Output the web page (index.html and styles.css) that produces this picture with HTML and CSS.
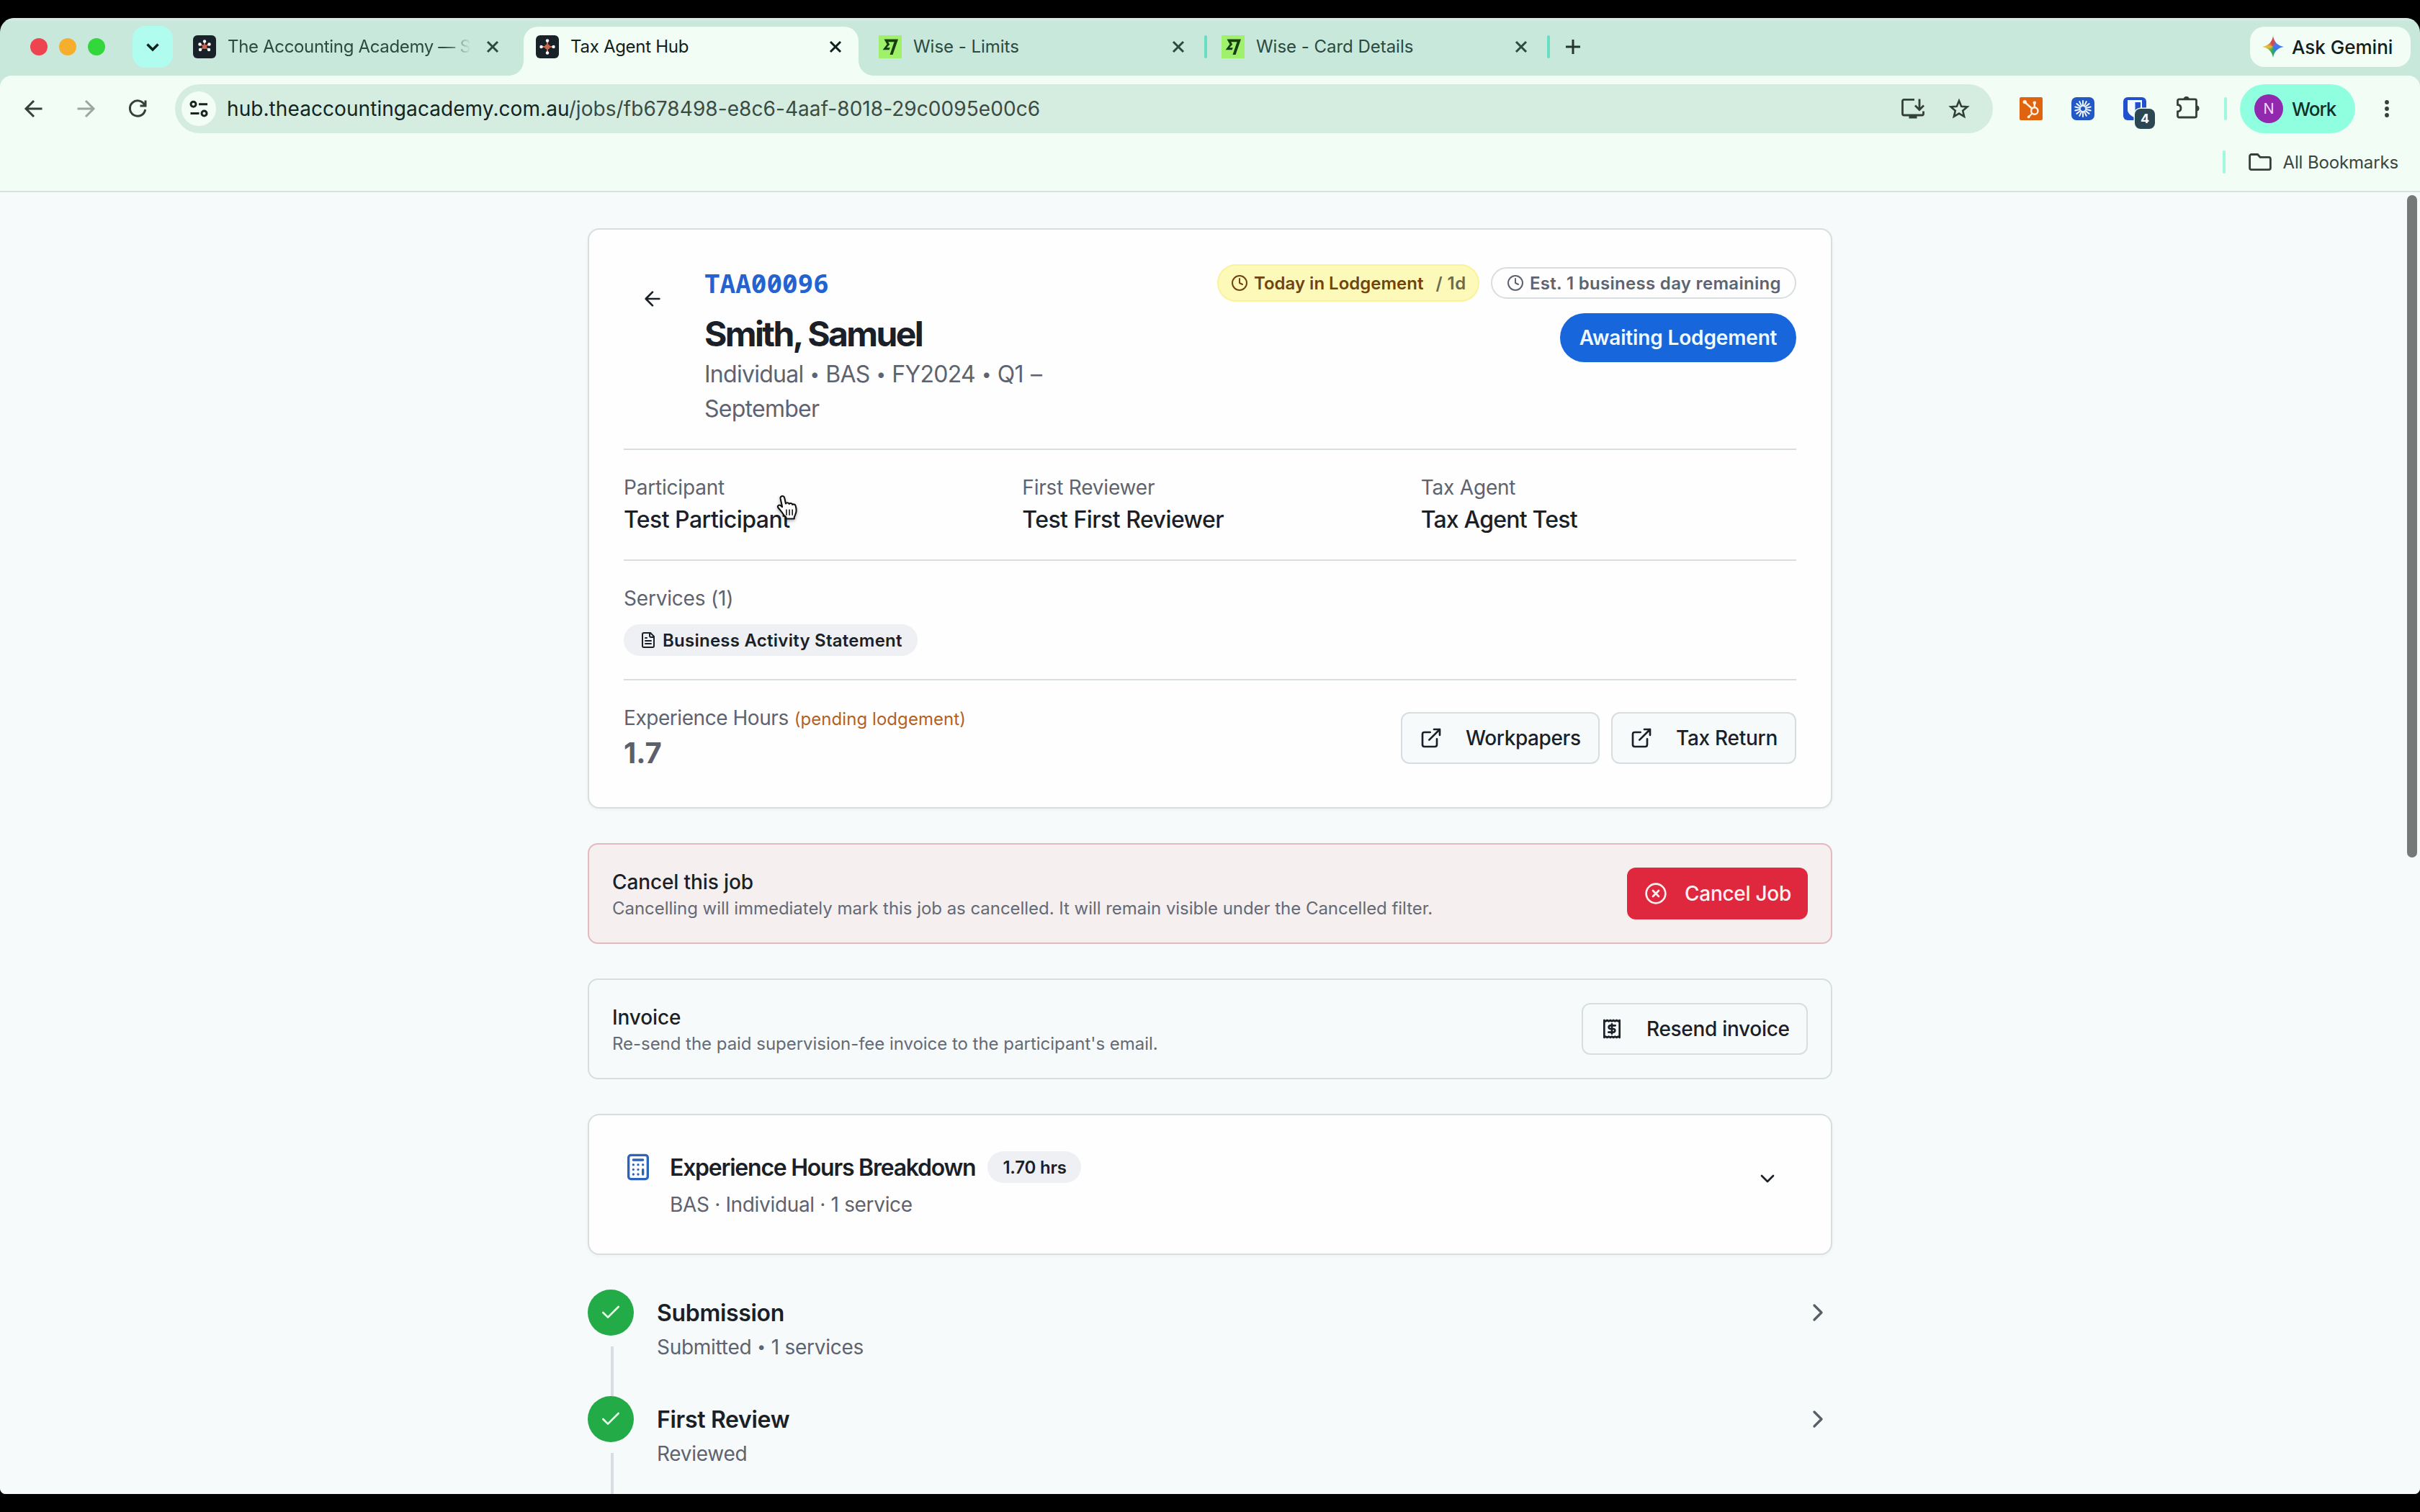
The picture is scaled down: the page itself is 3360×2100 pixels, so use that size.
FILE: index.html
```html
<!DOCTYPE html>
<html lang="en">
<head>
<meta charset="utf-8">
<title>Tax Agent Hub</title>
<link rel="stylesheet" href="styles.css">
</head>
<body>
<svg class="defs" aria-hidden="true">
  <symbol id="close" viewBox="0 0 32 32"><path d="M9 9l14 14M23 9L9 23" stroke="currentColor" stroke-width="3" fill="none"/></symbol>
  <symbol id="clock" viewBox="0 0 24 24"><circle cx="12" cy="12" r="10"/><path d="M12 6v6l4 2"/></symbol>
  <symbol id="external" viewBox="0 0 24 24"><path d="M15 3h6v6M10 14L21 3M18 13v6a2 2 0 0 1-2 2H5a2 2 0 0 1-2-2V8a2 2 0 0 1 2-2h6"/></symbol>
  <symbol id="check" viewBox="0 0 24 24"><path d="M20 6L9 17l-5-5"/></symbol>
  <symbol id="right" viewBox="0 0 24 24"><path d="M9 18l6-6-6-6"/></symbol>
  <symbol id="wise" viewBox="0 0 32 32"><rect width="32" height="32" fill="#9ff06a"/><path d="M7.500 5.500H27L19.500 27h-4l6-17.800h-8.300l2 3.600-4.200 4.400h4.800l-1.100 3H5.600l5.900-7.600z" fill="#173d12"/></symbol>
</svg>

<div class="window">
  <div class="tabstrip">
    <div class="lights"><i class="red"></i><i class="amber"></i><i class="green"></i></div>
    <div class="tab-search"><svg class="i32" viewBox="0 0 32 32"><path d="M8.500 12.500l7.500 7.500 7.500-7.500" fill="none" stroke="#10201c" stroke-width="3.400"/></svg></div>

    <div class="tab tab-academy">
      <svg class="i32" viewBox="0 0 32 32"><rect width="32" height="32" rx="6" fill="#1a2229"/><path d="M16 16V9.500M16 16l-7-4M16 16l7-4M16 16l-6 4M16 16l6 4" stroke="#c9694f" stroke-width="2"/><circle cx="16" cy="16" r="3" fill="#c9694f"/><g fill="#fff"><circle cx="16" cy="8.500" r="2.200"/><circle cx="9.500" cy="12.500" r="2.200"/><circle cx="22.500" cy="12.500" r="2.200"/><circle cx="10" cy="20" r="2.200"/><circle cx="22" cy="20" r="2.200"/></g></svg>
      <span class="tab-title fade">The Accounting Academy — S</span>
      <svg class="i32"><use href="#close"/></svg>
    </div>
    <div class="tab tab-active">
      <svg class="i32" viewBox="0 0 32 32"><rect width="32" height="32" rx="6" fill="#1a2229"/><path d="M16 8v16M8 16h16" stroke="#c9694f" stroke-width="2"/><circle cx="16" cy="16" r="3.600" fill="#c9694f"/><g fill="#fff"><circle cx="16" cy="7.500" r="2.200"/><circle cx="16" cy="24.500" r="2.200"/><circle cx="7.500" cy="16" r="2.200"/><circle cx="24.500" cy="16" r="2.200"/></g></svg>
      <span class="tab-title">Tax Agent Hub</span>
      <svg class="i32"><use href="#close"/></svg>
    </div>
    <div class="tab tab-limits">
      <svg class="i32"><use href="#wise"/></svg>
      <span class="tab-title wise">Wise - Limits</span>
      <svg class="i32"><use href="#close"/></svg>
    </div>
    <i class="tab-sep"></i>
    <div class="tab tab-card">
      <svg class="i32"><use href="#wise"/></svg>
      <span class="tab-title wise">Wise - Card Details</span>
      <svg class="i32"><use href="#close"/></svg>
    </div>
    <i class="tab-sep"></i>
    <svg class="i32 new-tab" viewBox="0 0 32 32"><path d="M16 6v20M6 16h20" stroke="currentColor" stroke-width="3"/></svg>
    <div class="gemini"><i class="spark"></i><span>Ask Gemini</span></div>
  </div>

  <div class="toolbar">
    <div class="addressrow">
      <svg class="i32 nav" viewBox="0 0 32 32"><path d="M27.500 16H6M16 5L5 16l11 11"/></svg>
      <svg class="i32 nav off" viewBox="0 0 32 32"><path d="M4.500 16H26M16 5l11 11-11 11"/></svg>
      <svg class="i32 nav" viewBox="0 0 32 32"><path d="M26 11.500A10.700 10.700 0 1 0 26.700 17M27 4.500V12h-7.500"/></svg>
      <div class="address">
        <div class="site"><svg class="i32" viewBox="0 0 32 32"><g fill="none" stroke="#16251f" stroke-width="3"><circle cx="8.500" cy="9.700" r="3.500"/><path d="M16 9.700h12"/><circle cx="23.500" cy="22.500" r="3.500"/><path d="M4.500 22.500h12"/></g></svg></div>
        <span class="url">hub.theaccountingacademy.com.au<span>/jobs/fb678498-e8c6-4aaf-8018-29c0095e00c6</span></span>
        <svg class="i32 install" viewBox="0 0 32 32"><path d="M18 3.300H3.500a2 2 0 0 0-2 2V23a2 2 0 0 0 2 2H29a1.500 1.500 0 0 0 1.500-1.500V19.500M25 2.500V17M19 11.500l6 6 6-6"/><path d="M10.500 25h11v4.500h-11z" class="solid"/></svg>
        <svg class="i32 star" viewBox="0 0 32 32"><path d="M16 5l3.200 7.700 8.300.7-6.300 5.400 1.900 8.100L16 22.600l-7.100 4.300 1.900-8.100-6.300-5.400 8.300-.7z"/></svg>
      </div>
      <svg class="i32 ext ext-hub" viewBox="0 0 32 32"><rect width="32" height="32" rx="2" fill="#e0630f"/><g stroke="#fff3e6" stroke-width="2.400" fill="none"><circle cx="20.800" cy="19" r="4.700"/><path d="M20.800 14V8M17 15.500L7.500 7M17.500 22.500L13 27"/></g><g fill="#fff3e6"><circle cx="20.800" cy="7.800" r="2.300"/><circle cx="7.200" cy="6.600" r="2.600"/><circle cx="12.600" cy="27.400" r="1.900"/></g></svg>
      <svg class="i32 ext" viewBox="0 0 32 32"><rect width="32" height="32" rx="7" fill="#2359c4"/><g stroke="#f2f8ff" stroke-width="2" stroke-linecap="round"><path id="ray" d="M16 5v7"/><use href="#ray" transform="rotate(25.700 16 16)"/><use href="#ray" transform="rotate(51.400 16 16)"/><use href="#ray" transform="rotate(77.100 16 16)"/><use href="#ray" transform="rotate(102.900 16 16)"/><use href="#ray" transform="rotate(128.600 16 16)"/><use href="#ray" transform="rotate(154.300 16 16)"/><use href="#ray" transform="rotate(180 16 16)"/><use href="#ray" transform="rotate(205.700 16 16)"/><use href="#ray" transform="rotate(231.400 16 16)"/><use href="#ray" transform="rotate(257.100 16 16)"/><use href="#ray" transform="rotate(282.900 16 16)"/><use href="#ray" transform="rotate(308.600 16 16)"/><use href="#ray" transform="rotate(334.300 16 16)"/></g></svg>
      <div class="ext vault"><svg class="i32" viewBox="0 0 32 32"><rect width="32" height="32" rx="6" fill="#2050cd"/><path d="M6 4h20v13.500c0 5-5 8.500-10 11-5-2.500-10-6-10-11z" fill="#f4fbff"/><path d="M16.500 7H24v10c0 3.500-4 6-7.500 8z" fill="#2050cd"/></svg><b>4</b></div>
      <svg class="i32 ext puzzle" viewBox="0 0 32 32"><path d="M3.500 3.800h22a2 2 0 0 1 2 2V27a2 2 0 0 1-2 2h-22a2 2 0 0 1-2-2v-6c6-.5 6-9 0-9.500V5.800a2 2 0 0 1 2-2z" fill="none" stroke="#333f39" stroke-width="2.800"/><path d="M9.500 4a4.200 4.200 0 0 1 8.400 0zM27.500 12.500a4 4 0 0 1 0 8z" fill="#333f39"/></svg>
      <i class="bar-sep"></i>
      <div class="profile"><span class="avatar">N</span><span class="work">Work</span></div>
      <svg class="i32 kebab" viewBox="0 0 32 32"><circle cx="16" cy="7" r="2.900"/><circle cx="16" cy="16" r="2.900"/><circle cx="16" cy="25" r="2.900"/></svg>
    </div>
    <div class="bookmarks">
      <i class="bar-sep"></i>
      <svg class="i32 folder" viewBox="0 0 32 32"><path d="M4 5.500h8.500l3.500 3.800h12a2.400 2.400 0 0 1 2.400 2.400v12.600a2.400 2.400 0 0 1-2.400 2.400H4a2.400 2.400 0 0 1-2.400-2.400V7.900A2.400 2.400 0 0 1 4 5.500z" fill="none" stroke="#333f39" stroke-width="2.800"/></svg>
      <span>All Bookmarks</span>
    </div>
  </div>

  <main class="page">
    <div class="column">
      <section class="card job">
        <header class="job-head">
          <div class="back"><svg class="lucide s32" viewBox="0 0 24 24"><path d="M12 19l-7-7 7-7M19 12H5"/></svg></div>
          <div class="job-id">
            <div class="code">TAA00096</div>
            <h1>Smith, Samuel</h1>
            <div class="meta">
              <div class="meta-line"><span>Individual</span><span class="bullet">•</span><span>BAS</span><span class="bullet">•</span><span>FY2024</span><span class="bullet">•</span><span class="quarter">Q1 –</span></div>
              <div>September</div>
            </div>
          </div>
          <div class="job-status">
            <div class="badges">
              <span class="badge today"><svg class="lucide s24"><use href="#clock"/></svg><span>Today in Lodgement</span><span class="limit">/ 1d</span></span>
              <span class="badge est"><svg class="lucide s24"><use href="#clock"/></svg><span>Est. 1 business day remaining</span></span>
            </div>
            <span class="state">Awaiting Lodgement</span>
          </div>
        </header>
        <div class="people">
          <div><div class="label">Participant</div><div class="value">Test Participant</div></div>
          <div><div class="label">First Reviewer</div><div class="value">Test First Reviewer</div></div>
          <div><div class="label">Tax Agent</div><div class="value tight">Tax Agent Test</div></div>
        </div>
        <div class="services">
          <div class="label">Services (1)</div>
          <span class="chip service"><svg class="lucide s24" viewBox="0 0 24 24"><path d="M15 2H6a2 2 0 0 0-2 2v16a2 2 0 0 0 2 2h12a2 2 0 0 0 2-2V7z"/><path d="M14 2v4a2 2 0 0 0 2 2h4M10 9H8M16 13H8M16 17H8"/></svg><span>Business Activity Statement</span></span>
        </div>
        <div class="hours">
          <div>
            <div class="label exp"><span>Experience Hours</span><span class="pending">(pending lodgement)</span></div>
            <div class="total">1.7</div>
          </div>
          <div class="actions">
            <span class="btn work-btn"><svg class="lucide s32"><use href="#external"/></svg><span>Workpapers</span></span>
            <span class="btn tax-btn"><svg class="lucide s32"><use href="#external"/></svg><span>Tax Return</span></span>
          </div>
        </div>
      </section>

      <section class="strip danger">
        <div><div class="strip-title">Cancel this job</div><div class="strip-text">Cancelling will immediately mark this job as cancelled. It will remain visible under the Cancelled filter.</div></div>
        <span class="btn cancel"><svg class="lucide s32" viewBox="0 0 24 24"><circle cx="12" cy="12" r="10"/><path d="M15 9l-6 6M9 9l6 6"/></svg><span>Cancel Job</span></span>
      </section>

      <section class="strip">
        <div><div class="strip-title">Invoice</div><div class="strip-text">Re-send the paid supervision-fee invoice to the participant's email.</div></div>
        <span class="btn resend"><svg class="lucide s32" viewBox="0 0 24 24"><path d="M4 3v18l1.500-1 1.600 1 1.600-1 1.700 1 1.600-1 1.600 1 1.700-1 1.600 1 1.600-1 1.500 1V3l-1.500 1-1.600-1-1.600 1-1.700-1L12 4l-1.600-1-1.700 1-1.600-1-1.600 1z"/><path d="M15.500 8.500h-5a1.750 1.750 0 0 0 0 3.500h3a1.750 1.750 0 0 1 0 3.500h-5M12 17V7"/></svg><span>Resend invoice</span></span>
      </section>

      <section class="card breakdown">
        <div class="breakdown-main">
          <div class="breakdown-head">
            <svg class="lucide s40" viewBox="0 0 24 24"><rect x="4" y="2" width="16" height="20" rx="2"/><path d="M8 6h8M16 14v4M16 10h.010M12 10h.010M8 10h.010M12 14h.010M8 14h.010M12 18h.010M8 18h.010"/></svg>
            <h2>Experience Hours Breakdown</h2>
            <span class="chip hrs">1.70 hrs</span>
          </div>
          <p>BAS · Individual · 1 service</p>
        </div>
        <div class="toggle"><svg class="lucide s32" viewBox="0 0 24 24"><path d="M6 9l6 6 6-6"/></svg></div>
      </section>

      <div class="steps">
        <div class="step">
          <div class="rail"><span class="dot"><svg class="lucide s32"><use href="#check"/></svg></span><i></i></div>
          <div class="step-body"><h3>Submission</h3><div class="step-note"><span>Submitted</span><span class="bullet">•</span><span>1 services</span></div></div>
          <svg class="lucide s40 more"><use href="#right"/></svg>
        </div>
        <div class="step">
          <div class="rail"><span class="dot"><svg class="lucide s32"><use href="#check"/></svg></span><i></i></div>
          <div class="step-body"><h3>First Review</h3><div class="step-note"><span>Reviewed</span></div></div>
          <svg class="lucide s40 more"><use href="#right"/></svg>
        </div>
      </div>
    </div>
    <i class="scroll-thumb"></i>
  </main>
</div>
<svg class="cursor" viewBox="0 0 32 36"><path d="M9 3c1.700 0 2.600 1 2.900 2.600l1.600 7.600c.6-1.700 4-1.800 4.600.4.900-1.400 3.900-1.300 4.400.9 1.400-1 3.900-.4 4.400 1.700.9 3.400 1.400 8-.3 11.300L25 31.500v2H14v-2c-2-1.500-4-4-5.500-6.500L3.200 18.500c-1.400-2 1-4.300 3.200-2.900l2.400 2L6.300 6C6 4.200 7.300 3 9 3z" fill="#fff" stroke="#111" stroke-width="2" stroke-linejoin="round"/><path d="M14.500 21v8M18.500 21v8M22.500 21v8" stroke="#111" stroke-width="1.500"/></svg>
</body>
</html>
```
FILE: styles.css
```css
* { box-sizing: border-box; }
html, body { margin: 0; height: 100%; overflow: hidden; background: #000; }
body { padding: 25px 0; font-family: Inter, "Liberation Sans", sans-serif; color: #1b1f27; }
h1, h2, h3, p { margin: 0; }
svg { display: block; flex: none; }
.defs { position: absolute; width: 0; height: 0; }
.i32 { width: 32px; height: 32px; }
.window { height: 2050px; display: flex; flex-direction: column; overflow: hidden; border-radius: 20px 20px 8px 8px; background: #c9e8dc; }

/* Tab strip */
.tabstrip { height: 80px; flex: none; display: flex; align-items: center; color: #2b4a41; box-shadow: inset 0 4px 0 #d3eae1; }
.lights { display: flex; gap: 16px; padding-left: 42px; width: 184px; }
.lights i { width: 24px; height: 24px; border-radius: 50%; }
.red { background: #ee4450; }
.amber { background: #f6ae2d; }
.green { background: #32d73c; }
.tab-search { width: 56px; height: 58px; border-radius: 18px; background: #b0fdef; display: flex; align-items: center; justify-content: center; }
.tab { display: flex; align-items: center; height: 80px; gap: 16px; }
.tab-title { flex: 1; min-width: 0; font-size: 24px; line-height: 32px; white-space: nowrap; letter-spacing: -0.012em; }
.tab-title.wise { letter-spacing: -0.001em; }
.fade { letter-spacing: -0.014em; -webkit-mask-image: linear-gradient(90deg, #000 300px, transparent 338px); mask-image: linear-gradient(90deg, #000 300px, transparent 338px); }
.tab-academy { width: 487px; padding: 0 27px 0 28px; }
.tab-active { position: relative; width: 465px; height: 68px; margin-top: 12px; padding: 0 16px 12px 17px; border-radius: 20px 20px 0 0; background: #f2fdf5; color: #10201c; }
.tab-active::before, .tab-active::after { content: ""; position: absolute; bottom: 0; width: 20px; height: 20px; }
.tab-active::before { left: -20px; background: radial-gradient(circle at 0 0, transparent 19.500px, #f2fdf5 20px); }
.tab-active::after { right: -20px; background: radial-gradient(circle at 100% 0, transparent 19.500px, #f2fdf5 20px); }
.tab-limits { width: 480px; padding: 0 20px 0 28px; }
.tab-card { width: 472px; padding: 0 20px; }
.tab-sep { width: 4px; height: 32px; border-radius: 2px; background: #67dfc3; }
.new-tab { margin-left: 16px; color: #22352e; }
.gemini { margin: 0 13px 0 auto; width: 223px; height: 56px; border-radius: 20px; background: #f2fdf5; display: flex; align-items: center; gap: 11px; padding-left: 17px; font-size: 26px; font-weight: 500; color: #10201c; }
.spark { width: 30px; height: 30px; background: conic-gradient(from 0deg, #d9474e 0deg, #4a7bea 50deg, #3a78f0 130deg, #2fa866 185deg, #55b04c 215deg, #e8c23a 270deg, #d9474e 340deg); clip-path: path("M15 0C16.500 8.500 21.500 13.500 30 15 21.500 16.500 16.500 21.500 15 30 13.500 21.500 8.500 16.500 0 15 8.500 13.500 13.500 8.500 15 0Z"); }

/* Toolbar */
.toolbar { flex: none; height: 162px; background: #f2fdf5; border-radius: 16px 16px 0 0; border-bottom: 2px solid #d9e1dd; }
.addressrow { height: 92px; display: flex; align-items: center; padding-left: 31px; }
.nav { margin-right: 40px; fill: none; stroke: #33413b; stroke-width: 3; }
.nav:nth-child(3) { margin-right: 36px; }
.off { stroke: #9aa7a1; }
.address { width: 2524px; height: 68px; border-radius: 34px; background: #d5ece1; display: flex; align-items: center; padding-left: 9px; }
.site { width: 48px; height: 48px; border-radius: 50%; background: #f2fdf5; display: flex; align-items: center; justify-content: center; margin-right: 15px; }
.url { font-size: 28px; letter-spacing: 0.0025em; color: #14241f; white-space: nowrap; }
.url span { color: #3a4b44; }
.install { margin-left: auto; fill: none; stroke: #333f39; stroke-width: 2.800; }
.install .solid { fill: #333f39; stroke: none; }
.star { margin: 0 31px 0 32px; fill: none; stroke: #333f39; stroke-width: 2.600; }
.ext { margin-left: 40px; }
.ext-hub { margin-left: 37px; }
.vault { position: relative; }
.vault b { position: absolute; left: 16px; top: 16px; width: 28px; height: 28px; border-radius: 8px; background: #2a4752; box-shadow: 0 0 0 1.500px #f2fdf5; color: #fff; font-size: 18px; line-height: 28px; text-align: center; }
.puzzle { margin-top: -2px; margin-left: 42px; }
.bar-sep { width: 4px; height: 32px; border-radius: 2px; background: #a0f8df; }
.addressrow .bar-sep { margin-left: 34px; }
.profile { width: 160px; height: 68px; margin-left: 18px; border-radius: 34px; background: #8fffe0; display: flex; align-items: center; padding-left: 20px; gap: 12px; }
.avatar { width: 40px; height: 40px; border-radius: 50%; background: #9128ae; color: #f3d9f7; font-size: 20px; line-height: 40px; text-align: center; }
.work { font-size: 26px; font-weight: 500; letter-spacing: -0.040em; color: #14302a; }
.kebab { margin-left: 28px; fill: #333f39; }
.bookmarks { height: 68px; padding: 0 30px 12px; display: flex; justify-content: flex-end; align-items: center; font-size: 24px; letter-spacing: -0.006em; color: #38463f; }
.folder { margin: 0 16px 0 32px; }

/* Page */
.page { position: relative; flex: 1; overflow: hidden; background: #f6fafb; padding-top: 50px; }
.column { width: 1728px; margin: 0 auto; display: flex; flex-direction: column; gap: 48px; }
.scroll-thumb { position: absolute; left: 3342px; top: 4px; width: 14px; height: 920px; border-radius: 7px; background: #757a79; }
.lucide { fill: none; stroke: currentColor; stroke-width: 2; stroke-linecap: round; stroke-linejoin: round; }
.s24 { width: 24px; height: 24px; }
.s32 { width: 32px; height: 32px; }
.s40 { width: 40px; height: 40px; }
.card { border: 2px solid #d8dde0; border-radius: 16px; background: #fefefe; padding: 48px; box-shadow: 0 2px 4px rgba(20, 40, 50, 0.040); }
.job { height: 806px; }
.bullet { font-size: 0.750em; }

.job-head { display: flex; align-items: flex-start; padding-bottom: 32px; }
.back { width: 80px; height: 80px; margin: 8px 32px 0 0; display: flex; align-items: center; justify-content: center; }
.code { font: 700 36px/52px "Noto Sans Mono", "DejaVu Sans Mono", monospace; letter-spacing: 0; color: #2463cf; }
h1 { margin-top: 16px; font-size: 48px; line-height: 56px; font-weight: 700; letter-spacing: -0.055em; }
.job-id { width: 500px; padding-top: 1px; margin-bottom: -1px; }
.meta { margin-top: 4px; font-size: 32px; line-height: 48px; letter-spacing: -0.023em; color: #5d636f; }
.meta-line { display: flex; gap: 9px; }
.quarter { word-spacing: 2px; }
.job-status { margin-left: auto; display: flex; flex-direction: column; align-items: flex-end; gap: 16px; }
.badges { display: flex; align-items: center; gap: 16px; }
.badge { display: flex; align-items: center; gap: 8px; border-radius: 26px; font-size: 24px; font-weight: 600; white-space: nowrap; }
.today { height: 52px; width: 364px; padding-left: 19px; background: #fcf9b9; box-shadow: inset 0 0 0 2px #f9f3a0; color: #70440f; }
.limit { margin-left: 9px; letter-spacing: 0.020em; color: #6b6950; }
.est { height: 44px; width: 424px; padding-left: 20px; border: 2px solid #d8dde0; letter-spacing: 0.0126em; color: #5d636f; }
.state { width: 328px; height: 68px; border-radius: 34px; background: #1766dc; color: #effaff; font-size: 28px; line-height: 68px; font-weight: 600; letter-spacing: -0.0054em; text-align: center; }

.people, .services, .hours { border-top: 2px solid #d8dddd; padding-top: 32px; }
.people { display: grid; grid-template-columns: repeat(3, 1fr); gap: 32px; padding-bottom: 32px; }
.label { font-size: 28px; line-height: 40px; letter-spacing: -0.007em; color: #5d636f; }
.value { padding-top: 1px; margin-bottom: -1px; font-size: 32px; line-height: 48px; font-weight: 500; letter-spacing: -0.017em; }
.value.tight { letter-spacing: -0.0246em; }
.services { padding-bottom: 32px; }
.chip { display: flex; align-items: center; width: max-content; height: 44px; padding: 0 22px; border-radius: 22px; background: #eef0f3; font-size: 24px; font-weight: 600; gap: 8px; white-space: nowrap; }
.service { margin-top: 16px; width: 408px; padding-right: 0; letter-spacing: 0.0104em; }
.hours { display: flex; align-items: center; justify-content: space-between; }
.label.exp { height: 40px; display: flex; align-items: baseline; gap: 8px; letter-spacing: -0.016em; }
.pending { font-size: 24px; letter-spacing: 0.0025em; color: #b4611f; }
.total { padding-top: 1px; margin-bottom: -1px; font-size: 40px; line-height: 56px; font-weight: 700; color: #5a606c; }
.actions { display: flex; gap: 16px; }
.btn { height: 72px; display: flex; align-items: center; gap: 32px; padding-left: 24px; border: 2px solid #d8dde0; border-radius: 12px; background: #f6fafb; font-size: 28px; font-weight: 500; letter-spacing: -0.010em; white-space: nowrap; }
.work-btn { width: 276px; letter-spacing: -0.0142em; }
.tax-btn { width: 257px; letter-spacing: -0.010em; }
.cancel { width: 251px; gap: 24px; border: 0; background: #df283e; color: #fff1f0; }
.resend { width: 314px; letter-spacing: -0.011em; }

.strip { height: 140px; border: 2px solid #d8dde0; border-radius: 14px; padding: 32px; display: flex; align-items: center; justify-content: space-between; }
.danger { background: #f5eff0; border-color: #e5b9c0; }
.strip-title { font-size: 28px; line-height: 40px; font-weight: 500; letter-spacing: -0.004em; }
.strip-text { padding-top: 1px; margin-bottom: -1px; font-size: 24px; line-height: 32px; letter-spacing: -0.0015em; color: #646a75; }

.breakdown { display: flex; justify-content: space-between; height: 196px; }
.breakdown-head { display: flex; align-items: center; height: 48px; }
.breakdown-head svg { color: #2b64bd; margin-right: 24px; }
h2 { padding-top: 1px; font-size: 32px; line-height: 48px; font-weight: 600; letter-spacing: -0.039em; margin-right: 17px; }
.hrs { letter-spacing: -0.009em; padding: 0 20px 0 21px; }
.breakdown p { margin: 8px 0 0 64px; font-size: 28px; line-height: 40px; letter-spacing: -0.012em; color: #5d636f; }
.toggle { width: 80px; height: 80px; display: flex; align-items: center; justify-content: center; }

.step { display: flex; height: 148px; }
.rail { width: 64px; display: flex; flex-direction: column; margin-right: 32px; }
.rail i { width: 4px; flex: 1; margin: 15px 0 0 32px; background: #d8dde1; }
.dot { width: 64px; height: 64px; border-radius: 50%; background: #22ab47; color: #e6ffe8; display: flex; align-items: center; justify-content: center; }
.step-body { flex: 1; padding-top: 9px; }
h3 { font-size: 32px; line-height: 48px; font-weight: 600; letter-spacing: -0.010em; }
.step-note { display: flex; gap: 8px; margin-top: 3px; font-size: 28px; line-height: 40px; letter-spacing: -0.010em; color: #5d636f; }
.more { margin-top: 12px; color: #585e66; }

.cursor { position: absolute; left: 1077px; top: 686px; width: 33px; height: 37px; filter: drop-shadow(0 2px 2px rgba(0, 0, 0, 0.300)); }
```
